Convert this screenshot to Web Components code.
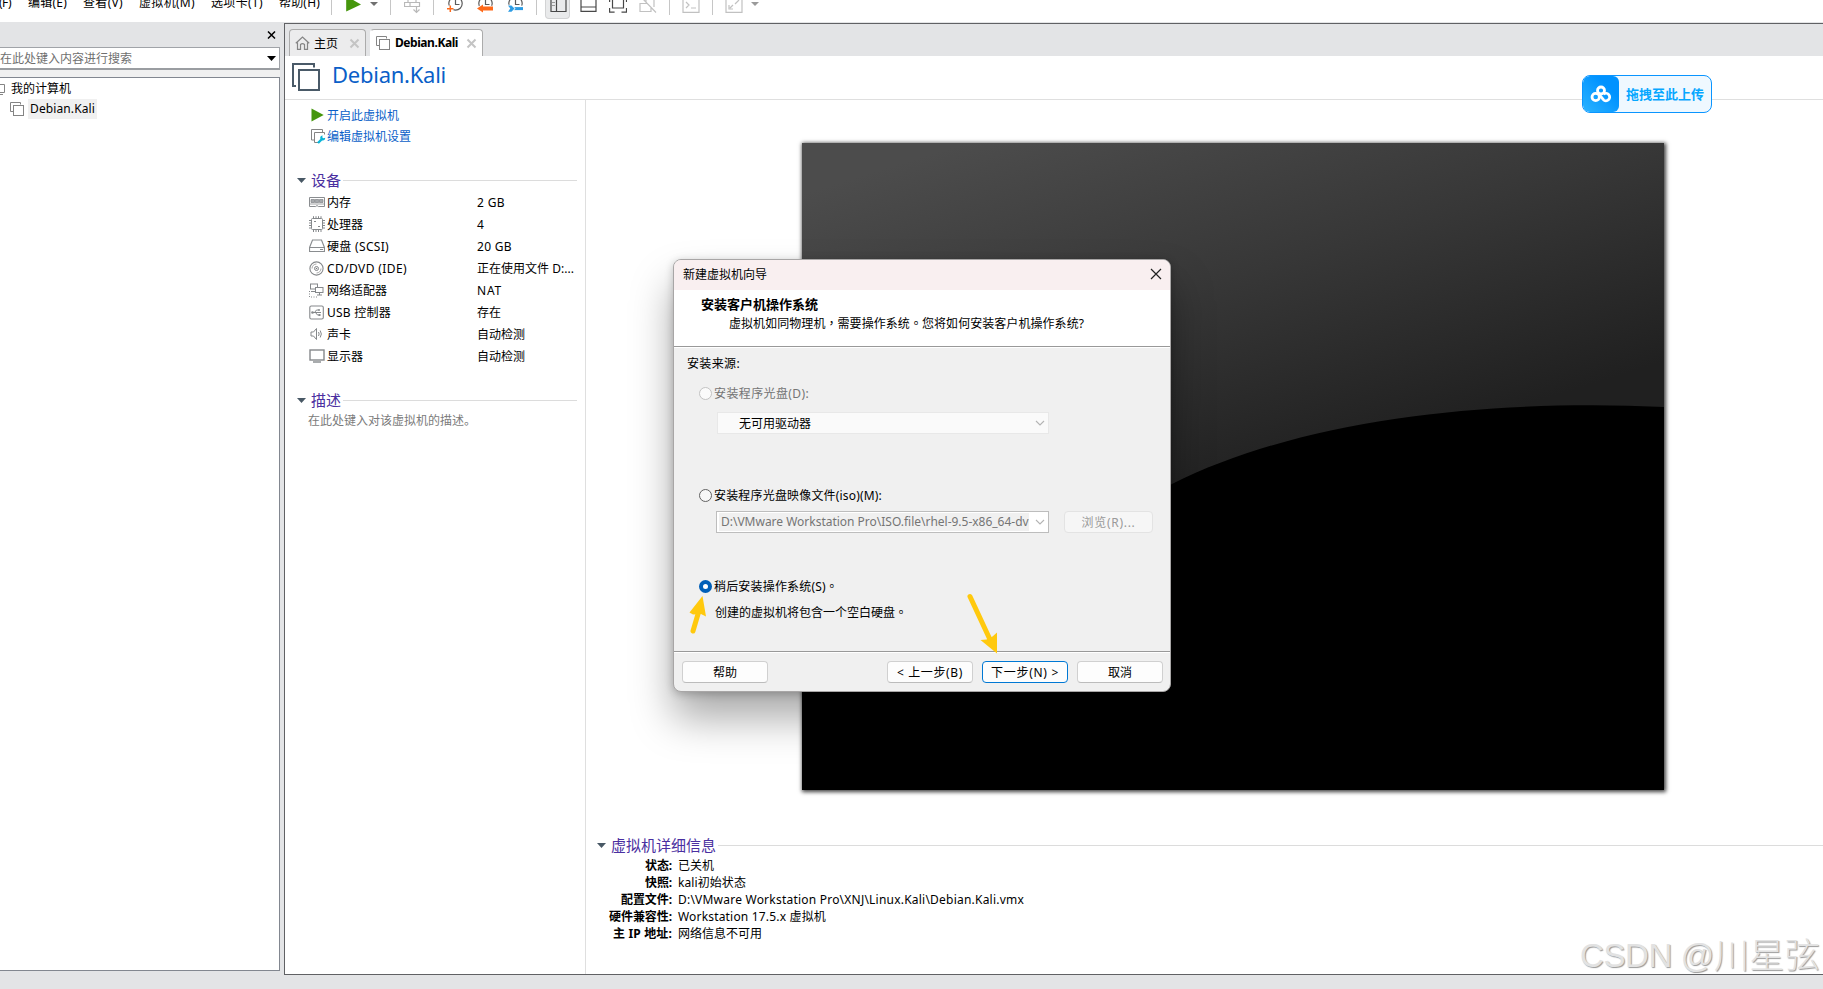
<!DOCTYPE html>
<html lang="zh-CN">
<head>
<meta charset="utf-8">
<title>VMware Workstation</title>
<style>
html,body{margin:0;width:1823px;height:989px;overflow:hidden;background:#e3e4e6}
body{font:12px "Noto Sans","Noto Sans CJK SC",sans-serif;color:#000}
</style>
</head>
<body>
<vm-app></vm-app>
<script>
function define(name, html, setup) {
  const t = document.createElement('template');
  t.innerHTML = html;
  customElements.define(name, class extends HTMLElement {
    constructor() {
      super();
      this.attachShadow({mode: 'open'}).append(t.content.cloneNode(true));
    }
    connectedCallback() { if (setup) setup(this, this.shadowRoot); }
  });
}

/* Text run whose tracking is adjusted to a fixed width (w, in px) */
define('fit-text', `<style>:host{display:inline-block;white-space:pre;flex:none}</style><span><slot></slot></span>`, (el, root) => {
  const w = parseFloat(el.getAttribute('w'));
  if (!w) return;
  const n = [...el.textContent].length;
  const now = root.querySelector('span').getBoundingClientRect().width;
  el.style.letterSpacing = ((w - now) / n) + 'px';
  el.style.width = w + 'px';
});

const stack = (c, w) => `<path d="M4.5 10.5H1.5V1.5h10v2" fill="none" stroke="${c}" stroke-width="${w}"/><rect x="4.5" y="4.5" width="10" height="10" fill="none" stroke="${c}" stroke-width="${w}"/>`;
const clock = `<circle cx="8.500" cy="3.500" r="6.700" fill="none" stroke="#5b5b5b" stroke-width="1.200"/><path d="M8.500-1v5.500h4" fill="none" stroke="#5b5b5b" stroke-width="1.200"/>`;
const ICONS = {
  stack: [16,16,stack('#848484',1)],
  bigstack: [30,30,`<path d="M4 23H1V1H22V4.500" fill="none" stroke="#4a5a68" stroke-width="2"/><rect x="7" y="7" width="20" height="20" fill="#fff" stroke="#4a5a68" stroke-width="2"/>`],
  pc: [16,16,`<path d="M5.500 2.500h8v8h-8M5 12.500h7" fill="none" stroke="#848484"/>`],
  home: [15,14,`<path d="M.8 7.300 7.500 1l6.700 6.300M2.500 6.500v6.800h3V8.500q2-1.800 4 0v4.800h3V6.500" fill="none" stroke="#858585" stroke-width="1.200"/>`],
  x: [11,11,`<path d="m1.500 1.500 8 8m0-8-8 8" stroke="#c4c4c4" stroke-width="2"/>`],
  xb: [9,8,`<path d="m1 .5 7 7m0-7-7 7" stroke="#000" stroke-width="1.500"/>`],
  xd: [12,12,`<path d="m1 1 10 10m0-10L1 11" stroke="#222" stroke-width="1.200"/>`],
  play: [13,14,`<path d="M.5.500 12.700 7 .5 13.500z" fill="#45960c"/>`],
  edit: [16,16,`<path d="M4 12H1.500V1.500h11V4M9 14.500H4.500v-10h10v2" fill="none" stroke="#848484"/><path d="m8 15 4-4" stroke="#0bb5d8" stroke-width="2.400"/><path d="M15.200 9.800a2.500 2.500 0 1 1-2.500-2.400l-.5 1.900 1.200.9z" fill="#0bb5d8"/>`],
  tri: [9,5,`<path d="M0 0h9L4.500 5z" fill="#485865"/>`],
  trib: [9,5,`<path d="M0 0h9L4.500 5z" fill="#000"/>`],
  trig: [8,4,`<path d="M0 0h8L4 4z" fill="#707070"/>`],
  mem: [16,12,`<path d="M.5 1.500h15v9H9.300L8 9.500 6.700 10.500H.5z" fill="#fff" stroke="#8a8d90"/><path d="M2 3.500h3.500v3H2zM6.200 3.500h3.500v3H6.200zM10.500 3.500H14v3h-3.500zM1 8h14" fill="#a6a9ac" stroke="#8a8d90" stroke-width=".8"/>`],
  cpu: [16,16,`<rect x="2.500" y="2.500" width="11" height="11" rx="1" fill="#fff" stroke="#85888b"/><path d="M4.500.2v2M7 .2v2M9.500.2v2M12 .2v2M4.500 14v2M7 14v2M9.500 14v2M12 14v2M0 4.500h2M0 7h2M0 9.500h2M0 12h2M14 4.500h2M14 7h2M14 9.500h2M14 12h2" stroke="#85888b"/><path d="M5 5.500h2M9 10.500h2" stroke="#85888b"/>`],
  disk: [16,14,`<path d="M3.500 1h9l3 7.500v4H.5v-4zM.5 8.500h15M11 10.500h3" fill="none" stroke="#8a8d90" stroke-width="1.200"/>`],
  cd: [15,15,`<circle cx="7.500" cy="7.500" r="6.600" fill="#fff" stroke="#85888b" stroke-width="1.100"/><circle cx="7.500" cy="7.500" r="2" fill="none" stroke="#85888b"/><circle cx="7.500" cy="7.500" r=".8" fill="#777"/><path d="M3 7.500A4.500 4.500 0 0 1 7.500 3M12 7.500A4.500 4.500 0 0 1 7.500 12" stroke="#aaa" fill="none"/>`],
  net: [15,15,`<rect x="1.500" y="1" width="7" height="5" fill="#fff" stroke="#85888b"/><path d="M2 8.500h4" stroke="#85888b"/><rect x="6.500" y="4.500" width="7.500" height="5" fill="#fff" stroke="#85888b"/><path d="M10.500 10v2M8 12h5" stroke="#85888b"/><path d="M.5 8v6h9" stroke="#85888b" stroke-dasharray="1 1.500" fill="none"/>`],
  usb: [15,15,`<rect x=".8" y="1" width="13.500" height="13" rx="1.500" fill="#fff" stroke="#85888b" stroke-width="1.100"/><path d="M3 7.500h9M5.500 7.500l2-2.500h2M6.500 7.500l2 2.500h2" fill="none" stroke="#85888b"/><circle cx="3.500" cy="7.500" r="1.300" fill="#85888b"/><circle cx="10" cy="5" r="1" fill="#85888b"/><rect x="9.500" y="9" width="2" height="2" fill="#85888b"/>`],
  snd: [14,14,`<path d="M2 5h2.500L7.500 1.500v11L4.500 9H2zM9.500 5q1.300 2 0 4M11.200 3.500q2.300 3.500 0 7" fill="none" stroke="#85888b"/>`],
  mon: [16,14,`<rect x="1" y="1" width="14" height="10" fill="#fff" stroke="#85888b" stroke-width="1.400"/><path d="M4 13h8" stroke="#85888b" stroke-width="1.400"/>`],
  chev: [10,6,`<path d="m1 1 4 4 4-4" fill="none" stroke="#b4b4b4" stroke-width="1.100"/>`],
  tplay: [15,14,`<path d="M.2-4 15 4.500.2 11.500z" fill="#45960c"/>`],
  tsend: [17,14,`<path d="M.5 2.500h15v4h-15zM6 2.500v4M4-1v3.500h8V-1M12.500 7v5M9.500 9.500l3 3 3-3" fill="none" stroke="#b9b9b9" stroke-width="1.200"/>`],
  tsnap: [17,14,clock+`<path d="M0 8.700h6.500M3.300 5.500V12" stroke="#fff" stroke-width="4"/><path d="M0 8.700h6.500M3.300 5.500V12" stroke="#ff6a1a" stroke-width="1.500"/>`],
  trev: [17,14,clock+`<path d="M0 8.500 6 4.500v2h10v4H6v2z" fill="#ff6a1a" stroke="#fff" stroke-width="1.500" paint-order="stroke"/>`],
  tmgr: [17,14,clock+`<path d="M5 8.600h11" stroke="#fff" stroke-width="6"/><path d="M5 8.600h11" stroke="#2d9ce4" stroke-width="3"/><path d="M1 5.500h3.500L7.500 8.600 4.500 11.800H1l2.300-3.200z" fill="#2d9ce4" stroke="#fff" stroke-width="1.500" paint-order="stroke"/>`],
  tside: [18,14,`<path d="M1-2v13.500h15V-2M6.500-2v13.500" fill="none" stroke="#484848" stroke-width="1.200"/><path d="M2 2.500h3M2 5.500h3" stroke="#9a9a9a"/>`],
  tbot: [17,14,`<path d="M1-2v13.300h15V-2M1 7h15" fill="none" stroke="#484848" stroke-width="1.200"/>`],
  tfull: [18,14,`<path d="M3.500-2v10h11V-2M.6 8v4.200h5M12.500 12.200h5V8M.6 0v2M17.500 0v2" fill="none" stroke="#484848" stroke-width="1.200"/>`],
  tuni: [18,14,`<path d="M1 3v8.500h11V8M1 3.500h6M15 0v7M2-3l15 15.500M7 0v4" fill="none" stroke="#c1c1c1" stroke-width="1.200"/>`],
  tterm: [18,14,`<path d="M1-2v14.300h16V-2M4 2l3 3-3 3M9 8h5" fill="none" stroke="#c1c1c1" stroke-width="1.200"/>`],
  tfit: [18,14,`<path d="M1-2v14.300h16V-2M4 5v4h4M5 8l3-3M10 4l4-4" fill="none" stroke="#c1c1c1" stroke-width="1.200"/>`],
  cloud: [22,18,`<g fill="none" stroke="#fff" stroke-width="2.800"><circle cx="11" cy="5.500" r="3.500"/><circle cx="5.700" cy="12" r="3.700"/><path d="M13.300 14.600a3.700 3.700 0 1 0 .3-5.400M13.600 14.800 9.500 10"/></g>`]
};
define('vm-icon', `<style>:host{display:inline-block;flex:none;line-height:0}svg{display:block}</style><svg></svg>`, (el, root) => {
  const icon = ICONS[el.getAttribute('name')];
  if (!icon) return;
  const [w, h, body] = icon;
  const s = root.querySelector('svg');
  s.setAttribute('width', w); s.setAttribute('height', h); s.setAttribute('viewBox', `0 0 ${w} ${h}`);
  s.innerHTML = body;
});

define('vm-toolbar', `<style>
:host{display:flex;height:22px;background:#fff;overflow:hidden;align-items:flex-start}
fit-text{line-height:16px;margin-top:-5px}
i{width:1px;height:15px;background:#c6c6c6;flex:none}
.on{width:25px;height:19px;background:#e9eaeb;border-radius:0 0 4px 4px;border:1px solid #d2d3d4;border-top:0;box-sizing:border-box;padding-left:4px}
</style>
<fit-text w="12" style="margin-left:-1px">(F)</fit-text><fit-text w="39" style="margin-left:17px">编辑(E)</fit-text><fit-text w="40" style="margin-left:16px">查看(V)</fit-text><fit-text w="56" style="margin-left:16px">虚拟机(M)</fit-text><fit-text w="52" style="margin-left:16px">选项卡(T)</fit-text><fit-text w="41" style="margin-left:16px">帮助(H)</fit-text>
<i style="margin-left:11px"></i><vm-icon name="tplay" style="margin-left:14px"></vm-icon><vm-icon name="trig" style="margin:2px 0 0 9px"></vm-icon>
<i style="margin-left:12px"></i><vm-icon name="tsend" style="margin-left:13px"></vm-icon>
<i style="margin-left:12px"></i><vm-icon name="tsnap" style="margin-left:13px"></vm-icon><vm-icon name="trev" style="margin-left:13px"></vm-icon><vm-icon name="tmgr" style="margin-left:13px"></vm-icon>
<i style="margin-left:12px"></i><span class="on" style="margin-left:8px"><vm-icon name="tside"></vm-icon></span><vm-icon name="tbot" style="margin-left:10px"></vm-icon><vm-icon name="tfull" style="margin-left:12px"></vm-icon><vm-icon name="tuni" style="margin-left:12px"></vm-icon>
<i style="margin-left:12px"></i><vm-icon name="tterm" style="margin-left:12px"></vm-icon><i style="margin-left:12px"></i><vm-icon name="tfit" style="margin-left:12px"></vm-icon><vm-icon name="trig" style="margin:2px 0 0 8px;opacity:.7"></vm-icon>`);

define('vm-sidebar', `<style>
:host{display:flex;flex-direction:column;width:280px;flex:none;height:949px}
.cap{height:25px;display:flex;justify-content:flex-end;align-items:flex-start;padding:9px 4px 0 0;box-sizing:border-box}
.search{height:23px;box-sizing:border-box;background:#fff;border:1px solid #a0a3a8;border-left:0;border-bottom:2px solid #9a9da1;display:flex;align-items:center;justify-content:space-between;padding:0 3px 0 0;color:#6f6f6f}
.gap{height:7px;background:#f0f0f0}
.tree{flex:1;background:#fff;border:1px solid #828790;border-left:0}
.r{display:flex;align-items:center;height:20px}
.sel{background:#f0f0f0;padding:0 2px;height:20px;line-height:19px}
</style>
<div class="cap"><vm-icon name="xb"></vm-icon></div>
<div class="search"><fit-text w="132">在此处键入内容进行搜索</fit-text><vm-icon name="trib"></vm-icon></div>
<div class="gap"></div>
<div class="tree"><div class="r"><vm-icon name="pc" style="margin:3px 4px 0 -9px"></vm-icon><fit-text w="60">我的计算机</fit-text></div>
<div class="r" style="margin-top:1px"><vm-icon name="stack" style="margin-left:9px"></vm-icon><span class="sel" style="margin-left:3px"><fit-text w="65">Debian.Kali</fit-text></span></div></div>`);

define('vm-tab', `<style>
:host{display:flex;align-items:center;box-sizing:border-box;height:27px;border:1px solid #ababab;border-bottom:0;border-radius:4px 4px 0 0;background:#ececed}
:host([active]){background:#fff;border-left-color:#fff;font-weight:700}
</style><slot></slot>`);

define('vm-section', `<style>
:host{display:flex;align-items:center;height:20px;font-size:15px;color:#4a2fa0}
i{flex:1;height:1px;background:#dcdcdc;margin-left:2px}
vm-icon{margin-right:5px}
::slotted(fit-text){margin-top:-1px}
</style><vm-icon name="tri"></vm-icon><slot></slot><i></i>`);

define('vm-device', `<style>
:host{display:flex;align-items:center;height:22px}
.ic{width:18px;flex:none;display:flex;align-items:center}
.n{width:150px;flex:none;display:flex}
</style><span class="ic"></span><span class="n"><slot></slot></span><slot name="v"></slot>`, (el, root) => {
  const ic = document.createElement('vm-icon');
  ic.setAttribute('name', el.getAttribute('icon'));
  root.querySelector('.ic').replaceChildren(ic);
});

define('vm-devices', `<style>
:host{display:block;width:301px;flex:none;border-right:1px solid #dfdfdf;box-sizing:border-box;padding:4px 8px 0 12px}
a{display:flex;align-items:center;height:22px;margin-left:14px;color:#0a5fc8}
a vm-icon{width:16px}
.list{margin:1px 0 23px 12px;white-space:nowrap}
.desc{color:#7b7b7b;margin:1px 0 0 11px;line-height:20px}
</style>
<a><vm-icon name="play"></vm-icon><fit-text w="72">开启此虚拟机</fit-text></a>
<a style="margin-top:-1px"><vm-icon name="edit" style="margin:0 1px 0 -1px"></vm-icon><fit-text w="84">编辑虚拟机设置</fit-text></a>
<vm-section style="margin-top:23px"><fit-text w="30">设备</fit-text></vm-section>
<div class="list">
<vm-device icon="mem"><fit-text w="24">内存</fit-text><fit-text slot="v" w="28">2 GB</fit-text></vm-device>
<vm-device icon="cpu"><fit-text w="36">处理器</fit-text><span slot="v">4</span></vm-device>
<vm-device icon="disk"><fit-text w="62">硬盘 (SCSI)</fit-text><fit-text slot="v" w="35">20 GB</fit-text></vm-device>
<vm-device icon="cd"><fit-text w="80">CD/DVD (IDE)</fit-text><fit-text slot="v" w="97">正在使用文件 D:...</fit-text></vm-device>
<vm-device icon="net"><fit-text w="60">网络适配器</fit-text><fit-text slot="v" w="25">NAT</fit-text></vm-device>
<vm-device icon="usb"><fit-text w="64">USB 控制器</fit-text><fit-text slot="v" w="24">存在</fit-text></vm-device>
<vm-device icon="snd"><fit-text w="24">声卡</fit-text><fit-text slot="v" w="48">自动检测</fit-text></vm-device>
<vm-device icon="mon"><fit-text w="36">显示器</fit-text><fit-text slot="v" w="48">自动检测</fit-text></vm-device>
</div>
<vm-section><fit-text w="30">描述</fit-text></vm-section>
<div class="desc"><fit-text w="168">在此处键入对该虚拟机的描述。</fit-text></div>`);

define('vm-preview', `<style>
:host{display:block;width:862px;height:647px;box-shadow:1px 1px 4px 1px rgba(0,0,0,.75)}
svg{display:block}
</style><svg width="862" height="647" viewBox="0 0 862 647">
<defs><linearGradient id="g" gradientUnits="userSpaceOnUse" x1="100" y1="20" x2="223" y2="417"><stop offset="0" stop-color="#4c4c4c"/><stop offset=".5" stop-color="#373737"/><stop offset="1" stop-color="#202020"/></linearGradient></defs>
<rect width="862" height="647" fill="url(#g)"/>
<path d="M0 648V500Q200 430 370 341C490 281 650 262.300 790 262.300Q826 262.300 862 264V648z" fill="#000"/></svg>`);

define('vm-details', `<style>
:host{display:block;padding:0 0 0 11px}
dl{display:grid;grid-template-columns:75px 1fr;column-gap:6px;grid-auto-rows:17px;line-height:17px;margin:2px 0 0}
dt{font-weight:700;display:flex;justify-content:flex-end;height:17px}dd{margin:0;height:17px}
</style>
<vm-section><fit-text w="105">虚拟机详细信息</fit-text></vm-section>
<dl><dt><fit-text w="27">状态:</fit-text></dt><dd><fit-text w="36">已关机</fit-text></dd>
<dt><fit-text w="27">快照:</fit-text></dt><dd><fit-text w="68">kali初始状态</fit-text></dd>
<dt><fit-text w="51">配置文件:</fit-text></dt><dd><fit-text w="346">D:\\VMware Workstation Pro\\XNJ\\Linux.Kali\\Debian.Kali.vmx</fit-text></dd>
<dt><fit-text w="63">硬件兼容性:</fit-text></dt><dd><fit-text w="148">Workstation 17.5.x 虚拟机</fit-text></dd>
<dt><fit-text w="59">主 IP 地址:</fit-text></dt><dd><fit-text w="84">网络信息不可用</fit-text></dd></dl>`);

define('vm-main', `<style>
:host{display:flex;flex-direction:column;flex:1;margin:1px 0 0 4px;height:952px;box-sizing:border-box;border:1px solid #606164;border-right:0;background:#fff}
.tabs{display:flex;gap:4px;height:32px;background:#e3e4e6;padding:5px 0 0 4px;box-sizing:border-box}
.head{height:44px;border-bottom:1px solid #dfdfdf;box-sizing:border-box;display:flex;align-items:flex-start;padding:7px 0 0 7px;font-size:22px;color:#0a5fc8}
.body{flex:1;display:flex}
.right{flex:1;display:flex;flex-direction:column}
</style>
<div class="tabs">
<vm-tab style="width:77px;padding-left:5px"><vm-icon name="home"></vm-icon><fit-text w="24" style="margin:-1px 11px 0 4px">主页</fit-text><vm-icon name="x"></vm-icon></vm-tab>
<vm-tab active style="width:113px;padding-left:4px"><vm-icon name="stack"></vm-icon><fit-text w="63" style="margin:-1px 8px 0 4px">Debian.Kali</fit-text><vm-icon name="x"></vm-icon></vm-tab>
</div>
<div class="head"><vm-icon name="bigstack"></vm-icon><fit-text w="114" style="margin:-3px 0 0 10px;line-height:28px">Debian.Kali</fit-text></div>
<div class="body"><vm-devices></vm-devices><div class="right"><vm-preview style="margin:43px 0 45px 216px"></vm-preview><vm-details></vm-details></div></div>`);

define('vm-button', `<style>
:host{display:flex;align-items:center;justify-content:center;box-sizing:border-box;width:86px;height:22px;background:#fdfdfd;border:1px solid #d0d0d0;border-bottom-color:#bcbcbc;border-radius:4px;flex:none}
:host([primary]){border-color:#0078d4}
:host([disabled]){background:#f6f6f6;color:#9a9a9a;border-color:#e3e3e3}
</style><slot></slot>`);

define('vm-radio', `<style>
:host{display:flex;align-items:center;height:20px;padding-left:19px}
b{width:13px;height:13px;box-sizing:border-box;border:1px solid #626262;border-radius:50%;background:#f7f7f7;margin-right:2px;flex:none}
:host([checked]) b{border:4px solid #005fb8;background:#fff}
:host([disabled]){color:#757575}
:host([disabled]) b{border-color:#c3c3c3;background:#fbfbfb}
</style><b></b><slot></slot>`);

define('vm-combo', `<style>
:host{display:flex;align-items:center;justify-content:space-between;box-sizing:border-box;width:332px;height:22px;padding:0 3px 0 21px;background:#fafafa;border:1px solid #e8e8e8;flex:none}
:host([edit]){width:333px;border-color:#bdbdbd;background:#fff;padding-left:2px;color:#757575}
span{overflow:hidden;white-space:nowrap}
:host([edit]) span{background:#f0f0f0;width:310px;height:18px;line-height:17px;padding-left:2px;box-sizing:border-box}
</style><span><slot></slot></span><vm-icon name="chev"></vm-icon>`);

define('vm-wizard', `<style>
:host{display:flex;flex-direction:column;box-sizing:border-box;width:498px;height:433px;border:1px solid #a8a6a6;border-radius:8px;background:#f0f0f0;overflow:hidden;box-shadow:0 2px 8px rgba(0,0,0,.22),0 26px 42px rgba(0,0,0,.34);font-family:"Noto Sans","Noto Sans CJK TC","Noto Sans CJK SC",sans-serif}
.title{height:30px;background:#f9eff0;display:flex;justify-content:space-between;align-items:center;padding:0 8px 2px 9px;box-sizing:border-box}
.head{height:57px;background:#fff;border-bottom:1px solid #999;box-sizing:border-box;padding:5px 0 0 27px}
.head div{line-height:18px;height:18px}
.head .h{font-size:13px;font-weight:700;margin-bottom:2px}
.body{border-top:1px solid #fff;height:305px;border-bottom:1px solid #999;padding:6px 0 0 6px;box-sizing:border-box;display:flex;flex-direction:column}
.l{line-height:20px;padding-left:7px}
.iso{display:flex;gap:15px;align-items:flex-start;margin:6px 0 0 36px}
.foot{flex:1;border-top:1px solid #fff;display:flex;padding:8px 7px 0 8px;align-items:flex-start;gap:9px}
</style>
<div class="title"><fit-text w="84" style="margin-top:-1px">新建虚拟机向导</fit-text><vm-icon name="xd"></vm-icon></div>
<div class="head"><div class="h"><fit-text w="117">安装客户机操作系统</fit-text></div><div style="padding-left:28px"><fit-text w="355">虚拟机如同物理机，需要操作系统。您将如何安装客户机操作系统?</fit-text></div></div>
<div class="body"><div class="l"><fit-text w="53">安装来源:</fit-text></div>
<vm-radio disabled style="margin-top:9px"><fit-text w="95">安装程序光盘(D):</fit-text></vm-radio>
<vm-combo style="margin:9px 0 0 37px"><fit-text w="72" style="color:#000">无可用驱动器</fit-text></vm-combo>
<vm-radio style="margin-top:51px"><fit-text w="168">安装程序光盘映像文件(iso)(M):</fit-text></vm-radio>
<div class="iso"><vm-combo edit><fit-text w="315">D:\\VMware Workstation Pro\\ISO.file\\rhel-9.5-x86_64-dvd</fit-text></vm-combo><vm-button disabled style="width:89px"><fit-text w="54">浏览(R)...</fit-text></vm-button></div>
<vm-radio checked style="margin-top:43px"><fit-text w="124">稍后安装操作系统(S)。</fit-text></vm-radio>
<div class="l" style="padding-left:35px;margin-top:7px"><fit-text w="192">创建的虚拟机将包含一个空白硬盘。</fit-text></div></div>
<div class="foot"><vm-button style="margin-right:auto"><fit-text w="24">帮助</fit-text></vm-button><vm-button><fit-text w="66">&lt; 上一步(B)</fit-text></vm-button><vm-button primary><fit-text w="68">下一步(N) &gt;</fit-text></vm-button><vm-button><fit-text w="24">取消</fit-text></vm-button></div>`);

define('upload-badge', `<style>
:host{display:flex;box-sizing:border-box;width:130px;height:38px;border:1px solid #0a95ff;border-radius:8px;background:#eff8ff;overflow:hidden;align-items:center;color:#06a7ff;font-size:13px;font-weight:700}
span{width:36px;height:36px;background:linear-gradient(45deg,#2bb3ff,#0092ff 70%);border-radius:6px;display:flex;align-items:center;justify-content:center;margin-right:7px}
</style><span><vm-icon name="cloud"></vm-icon></span><fit-text w="78" style="margin-top:-2px">拖拽至此上传</fit-text>`);

define('mark-arrows', `<style>:host{display:block;pointer-events:none}svg{display:block}</style>
<svg width="330" height="70" viewBox="680 590 330 70"><g fill="#ffc90e"><path d="m702.500 596 3.500 20.500-5-2.500-8 .500-3.500-2z"/><path d="m997 653.500-16.500-13.500 6-.5 6-3 4.500-4z"/></g><path d="m693 631 6.500-22M970 596.500l19.500 42" stroke="#ffc90e" stroke-width="5" stroke-linecap="round"/></svg>`);

define('page-mark', `<style>:host{display:flex;font-size:33px;line-height:44px;font-family:"Liberation Sans","Noto Sans CJK SC",sans-serif;font-weight:300;color:#e2e2e2;text-shadow:1px 1px 1px #999}</style><slot></slot>`);

define('vm-app', `<style>
:host{display:block;position:relative;width:1823px;height:989px;background:#e3e4e6;overflow:hidden}
.work{display:flex;align-items:flex-start}
vm-wizard,upload-badge,mark-arrows,page-mark{position:absolute}
</style>
<vm-toolbar></vm-toolbar>
<div class="work"><vm-sidebar></vm-sidebar><vm-main></vm-main></div>
<upload-badge style="left:1582px;top:75px"></upload-badge>
<vm-wizard lang="zh-Hant" style="left:673px;top:259px"></vm-wizard>
<mark-arrows style="left:680px;top:590px"></mark-arrows>
<page-mark style="left:1580px;top:934px"><fit-text w="134">CSDN @</fit-text><fit-text w="106" style="font-size:35px">川星弦</fit-text></page-mark>`);
</script>
</body>
</html>
